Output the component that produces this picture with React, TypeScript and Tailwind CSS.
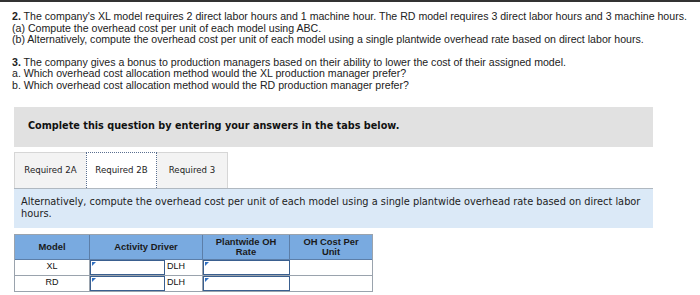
import React from "react";

const Input = () => (
  <div className="relative h-full border border-[#3a5f8f] bg-white">
    <div className="absolute left-[1px] top-[1px] w-0 h-0 border-t-[4px] border-t-[#2f6fc0] border-r-[4px] border-r-transparent" />
  </div>
);

export default function App() {
  return (
    <div className="w-[700px] h-[295px] bg-white relative overflow-hidden" style={{ fontFamily: "'Liberation Sans', Arial, sans-serif" }}>
      <div className="h-[2px] bg-[#333]" />
      <div className="pl-[12px] pt-[9px] text-[10.6px] leading-[11.7px] text-[#222]">
        <div><b>2.</b> The company's XL model requires 2 direct labor hours and 1 machine hour. The RD model requires 3 direct labor hours and 3 machine hours.</div>
        <div>(a) Compute the overhead cost per unit of each model using ABC.</div>
        <div>(b) Alternatively, compute the overhead cost per unit of each model using a single plantwide overhead rate based on direct labor hours.</div>
        <div className="h-[10.5px]" />
        <div><b>3.</b> The company gives a bonus to production managers based on their ability to lower the cost of their assigned model.</div>
        <div>a. Which overhead cost allocation method would the XL production manager prefer?</div>
        <div>b. Which overhead cost allocation method would the RD production manager prefer?</div>
      </div>
      <div className="ml-[14px] mt-[15px] w-[639px]" style={{ fontFamily: "'DejaVu Sans', Verdana, sans-serif" }}>
        <div className="h-[40px] bg-[#e1e1e1] flex items-center pl-[14px] text-[9.7px] font-bold text-[#111]">
          Complete this question by entering your answers in the tabs below.
        </div>
        <div className="mt-[5px] flex h-[36px] text-[8.6px] text-[#222]">
          <div className="w-[72px] flex items-center justify-center bg-[#f3f3f3] border-t border-l border-[#d6d6d6]">Required 2A</div>
          <div className="w-[71px] flex items-center justify-center bg-white border border-dotted border-[#5a6f90] border-b-0">Required 2B</div>
          <div className="w-[71px] flex items-center justify-center bg-[#f3f3f3] border-t border-r border-[#d6d6d6]">Required 3</div>
        </div>
        <div className="h-[40px] bg-[#dbe9f7] border-t border-[#b0b8c0] pl-[7px] pr-[10px] pt-[7px] text-[9.8px] leading-[12px] text-[#222]">
          Alternatively, compute the overhead cost per unit of each model using a single plantwide overhead rate based on direct labor hours.
        </div>
        <div className="mt-[6px] w-[359px] border border-[#9aa3ad] text-[9px] text-[#111]" style={{ fontFamily: "'Liberation Sans', Arial, sans-serif" }}>
          <div className="flex h-[24px] bg-[#79aae0] font-bold text-[#1a1a1a] leading-[10px] text-[9.4px]">
            <div className="w-[75px] flex items-center justify-center border-r border-[#5c7ea8]">Model</div>
            <div className="w-[113px] flex items-center justify-center border-r border-[#5c7ea8]">Activity Driver</div>
            <div className="w-[87px] flex items-center justify-center text-center border-r border-[#5c7ea8]">Plantwide OH<br />Rate</div>
            <div className="flex-1 flex items-center justify-center text-center">OH Cost Per<br />Unit</div>
          </div>
          {["XL", "RD"].map((m, i) => (
            <div key={m} className={`flex h-[16px] bg-white border-t ${i === 0 ? "border-[#5c7ea8]" : "border-[#9aa3ad]"}`}>
              <div className="w-[75px] flex items-center justify-center border-r border-[#9aa3ad]">{m}</div>
              <div className="w-[75px]"><Input /></div>
              <div className="w-[38px] flex items-center pl-[2px] border-r border-[#9aa3ad]">DLH</div>
              <div className="w-[87px]"><Input /></div>
              <div className="flex-1" />
            </div>
          ))}
        </div>
      </div>
    </div>
  );
}
